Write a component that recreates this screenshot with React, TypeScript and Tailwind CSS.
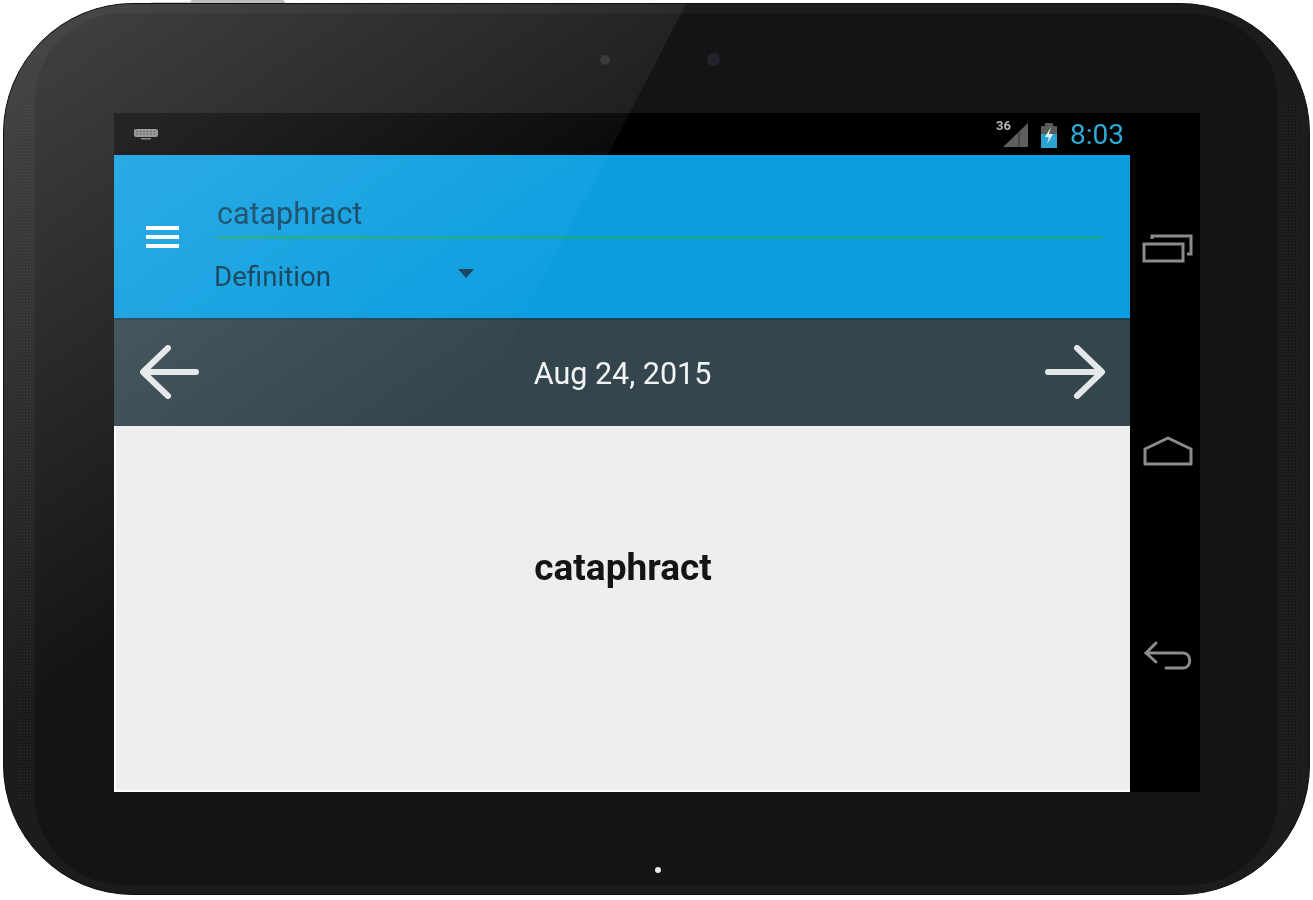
import React from "react";

const Grip = ({ side }: { side: "l" | "r" }) => (
  <div
    className={`absolute top-[100px] h-[700px] w-[15px] rounded-[6px] bg-[#1a1a1a] bg-[radial-gradient(#2e2e2e_0.7px,transparent_0.8px)] bg-[length:3px_3px] ${
      side === "l" ? "left-[13px]" : "right-[11px]"
    }`}
  />
);

export default function App() {
  return (
    <div className="relative h-[900px] w-[1313px] overflow-hidden bg-white font-['Roboto',sans-serif]">
      {/* top hardware buttons */}
      <div className="absolute left-[150px] top-[2px] h-[6px] w-[40px] rounded-t-[3px] bg-[#c8c8c8]" />
      <div className="absolute left-[190px] top-[0px] h-[6px] w-[95px] rounded-t-[3px] bg-[#bdbdbd]" />

      <div className="relative ml-[3px] mt-[3px] h-[892px] w-[1307px] overflow-hidden rounded-[130px] border border-[#101010] bg-[#1c1c1c]">
        <Grip side="l" />
        <Grip side="r" />
        {/* front bezel */}
        <div className="absolute inset-x-[31px] bottom-[9px] top-[9px] rounded-[88px] bg-[#141414]" />

        <div className="relative -m-px flex h-[892px] flex-col pb-[103px] pl-[111px] pr-[110px] pt-[110px]">
          {/* status bar */}
          <div className="flex h-[42px] shrink-0 items-center bg-black pl-[19px] pr-[76px]">
            <svg className="blur-[0.4px]" width="26" height="16" viewBox="0 0 26 16">
              <rect x="1" y="3" width="24" height="8" rx="2" fill="#8a8a8a" />
              <path d="M3 5.5h20M3 8h20" stroke="#3a3a3a" strokeWidth="0.8" strokeDasharray="2 1.5" />
              <rect x="8" y="12" width="10" height="1.5" fill="#777" />
            </svg>
            <div className="ml-auto mt-[2px] flex items-center">
              <div className="relative mr-[10px] h-[30px] w-[34px] blur-[0.4px]">
                <svg className="absolute left-0 top-0" width="34" height="30" viewBox="0 0 34 30">
                  <path d="M8 27L33 3V27Z" fill="#5e5e5e" />
                  <path d="M24 27V12" stroke="#2c2c2c" strokeWidth="0.8" />
                </svg>
                <span className="absolute -top-[1px] left-[1px] text-[13px] font-bold leading-[14px] text-[#b5b5b5]">36</span>
              </div>
              <svg className="mr-[11px] blur-[0.4px]" width="20" height="28" viewBox="0 0 20 28">
                <path d="M6 2h8v3h4v22H2V5h4Z" fill="#5a5a5a" />
                <path d="M2 13h16v14H2Z" fill="#2aa3d0" />
                <path d="M12 6L6 16h4l-2 7 6-10h-4Z" fill="#e8f4f8" />
              </svg>
              <span className="text-[28px] leading-none text-[#2eaad8] blur-[0.4px]">8:03</span>
            </div>
          </div>

          <div className="flex min-h-0 flex-1">
            {/* app */}
            <div className="flex w-[1016px] shrink-0 flex-col">
              <div className="flex h-[165px] shrink-0 border-b-2 border-[#1f3f4f] bg-[#0a9de0]">
                <div className="flex w-[103px] shrink-0 items-center justify-center pr-[7px]">
                  <div className="flex w-[33px] flex-col gap-[5px] blur-[0.3px]">
                    <div className="h-[4px] bg-white" />
                    <div className="h-[4px] bg-white" />
                    <div className="h-[4px] bg-white" />
                  </div>
                </div>
                <div className="flex flex-1 flex-col pr-[28px] pt-[39px]">
                  <div className="h-[45px] border-b-[3px] border-[#12a58f] text-[30.5px] leading-[40px] text-[#0c4460]">
                    <span className="blur-[0.4px]">cataphract</span>
                  </div>
                  <div className="relative -ml-[3px] mt-[20px] text-[27.7px] leading-[36px] text-[#0d3a52] blur-[0.4px]">
                    Definition
                    <div className="absolute left-[244px] top-[10px] h-0 w-0 border-x-[8px] border-t-[9px] border-x-transparent border-t-[#12405a]" />
                  </div>
                </div>
              </div>

              <div className="flex h-[106px] shrink-0 items-center justify-between bg-[#34454d] pb-[2px] pl-[25px] pr-[24px]">
                <svg className="blur-[0.4px]" width="62" height="60" viewBox="0 0 62 60" fill="none" stroke="#e4e8ea" strokeWidth="6" strokeLinecap="round" strokeLinejoin="round">
                  <path d="M57 30H6M29 6L4 30l25 24" />
                </svg>
                <span className="mt-[4px] text-[30.5px] leading-none text-[#f2f4f5] blur-[0.4px]">Aug 24, 2015</span>
                <svg className="blur-[0.4px]" width="62" height="60" viewBox="0 0 62 60" fill="none" stroke="#e4e8ea" strokeWidth="6" strokeLinecap="round" strokeLinejoin="round">
                  <path d="M4 30h52M33 6l25 24-25 24" />
                </svg>
              </div>

              <div className="flex flex-1 items-start justify-center border-b-2 border-l-2 border-white bg-[#eeeeee] pt-[120px]">
                <span className="text-[37px] font-bold leading-[44px] text-[#141414] blur-[0.4px]">cataphract</span>
              </div>
            </div>

            {/* nav bar */}
            <div className="flex flex-1 flex-col items-center bg-black pl-[5px] pt-[78px]">
              <svg className="blur-[0.4px]" width="52" height="32" viewBox="0 0 52 32" fill="none" stroke="#8c8c8c" strokeWidth="3">
                <rect x="2" y="11" width="39" height="17" />
                <path d="M10 6V3h39v18h-4" />
              </svg>
              <svg className="mt-[171px] blur-[0.4px]" width="52" height="32" viewBox="0 0 52 32" fill="none" stroke="#8c8c8c" strokeWidth="3" strokeLinejoin="round">
                <path d="M3 28V13L26 2l23 11v15Z" />
              </svg>
              <svg className="mt-[172px] blur-[0.4px]" width="52" height="32" viewBox="0 0 52 32" fill="none" stroke="#8c8c8c" strokeWidth="3" strokeLinecap="round">
                <path d="M14 3L4 13l10 9M5 13h36c9 0 9 15 0 15H24" />
              </svg>
            </div>
          </div>
        </div>

        {/* camera and LED */}
        <div className="absolute left-[596px] top-[51px] h-[10px] w-[10px] rounded-full bg-[#2b2b2b]" />
        <div className="absolute left-[703px] top-[49px] h-[13px] w-[13px] rounded-full bg-[#23222e]" />
        <div className="absolute left-[651px] top-[863px] h-[6px] w-[6px] rounded-full bg-[#e8e8e8]" />

        {/* diagonal glare across the glass */}
        <svg className="pointer-events-none absolute left-0 top-0" width="1307" height="892">
          <defs>
            <linearGradient id="glare" gradientUnits="userSpaceOnUse" x1="0" y1="0" x2="340" y2="490">
              <stop offset="0" stopColor="#fff" stopOpacity="0.2" />
              <stop offset="0.6" stopColor="#fff" stopOpacity="0.08" />
              <stop offset="1" stopColor="#fff" stopOpacity="0" />
            </linearGradient>
          </defs>
          <path d="M0 0H682L400 545L0 800Z" fill="url(#glare)" />
        </svg>
      </div>
    </div>
  );
}
